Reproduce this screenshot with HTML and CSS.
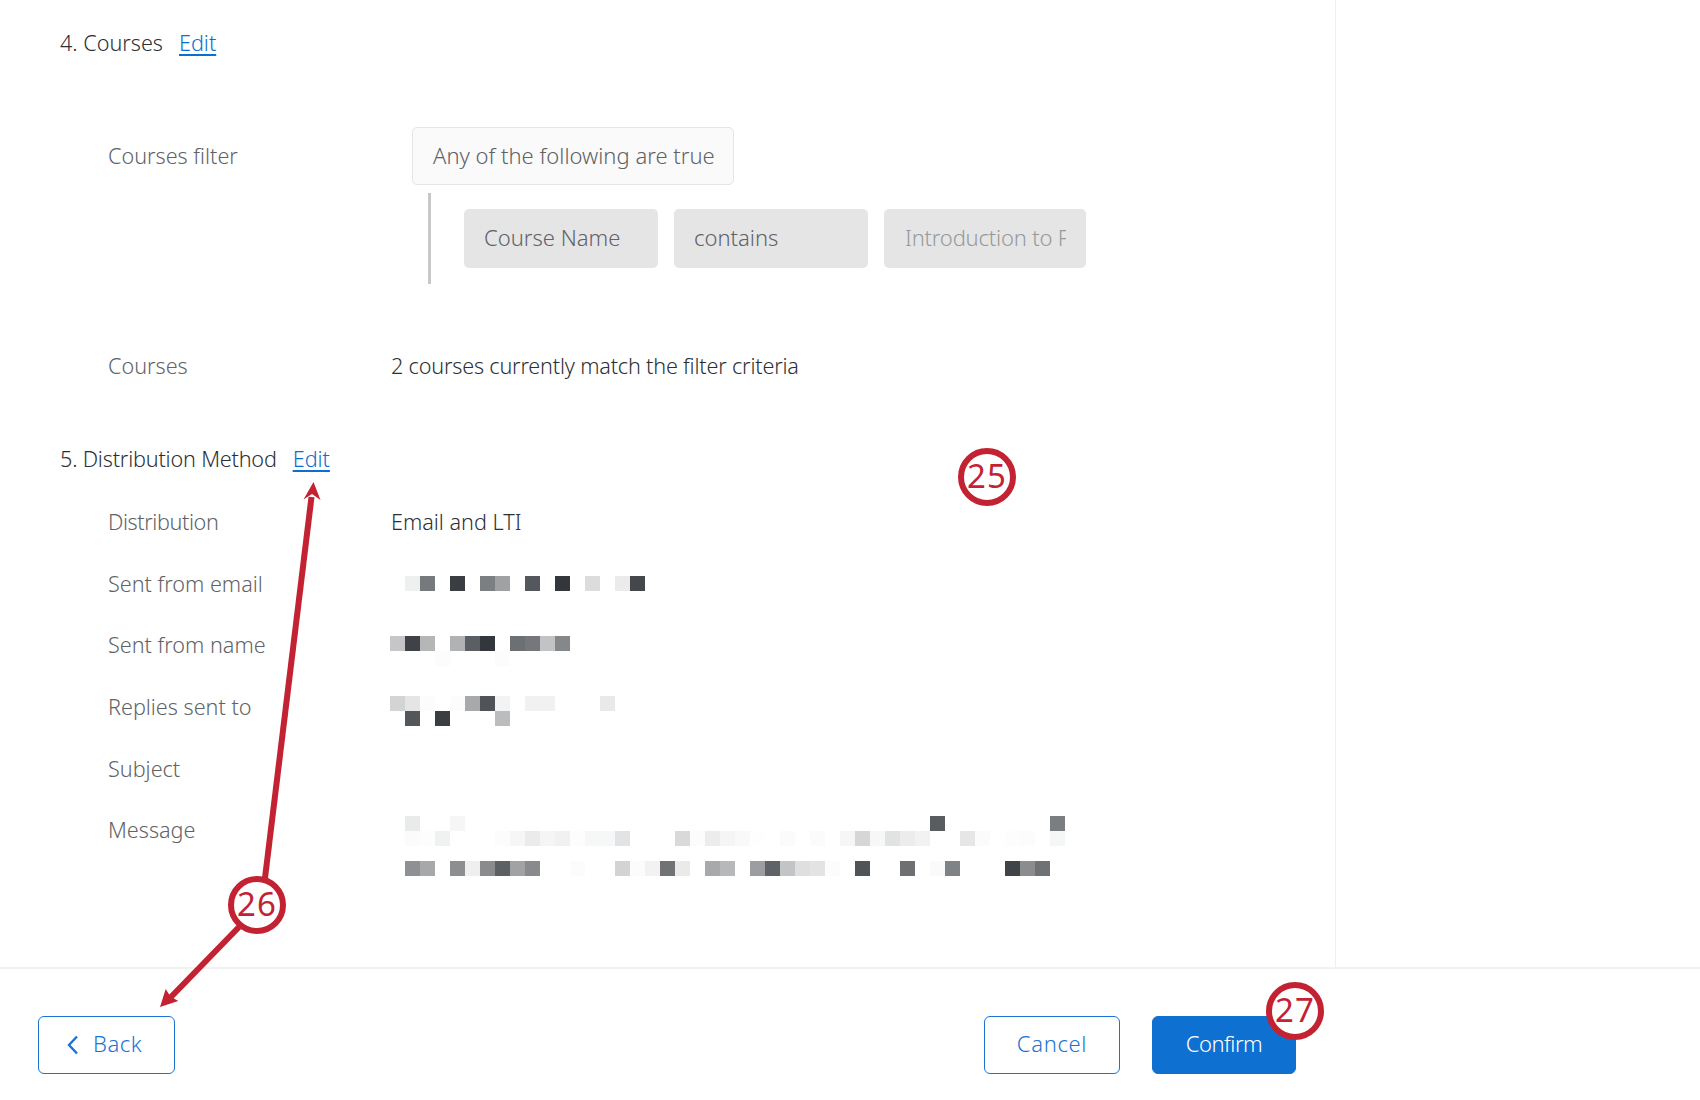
FILE: index.html
```html
<!DOCTYPE html>
<html lang="en">
<head>
<meta charset="utf-8">
<title>Review</title>
<link rel="stylesheet" href="styles.css">
</head>
<body>
<div class="page">
  <div class="main">
    <div class="content">
      <div class="head head-first"><span>4. Courses</span><a class="edit" href="#">Edit</a></div>
      <div class="rows">
        <div class="row row-filter">
          <div class="label label-filter">Courses filter</div>
          <div class="filter">
            <div class="any">Any of the following are true</div>
            <div class="branch">
              <div class="pill pill-name">Course Name</div>
              <div class="pill pill-op">contains</div>
              <div class="pill pill-val"><span class="pill-clip">Introduction to F</span></div>
            </div>
          </div>
        </div>
        <div class="row row-courses">
          <div class="label">Courses</div>
          <div class="value tight">2 courses currently match the filter criteria</div>
        </div>
      </div>
      <div class="head head-second"><span class="tight">5. Distribution Method</span><a class="edit" href="#">Edit</a></div>
      <div class="rows rows-dist">
        <div class="row"><div class="label tighter">Distribution</div><div class="value">Email and LTI</div></div>
        <div class="row"><div class="label">Sent from email</div>
          <svg class="mosaic m-email" width="270" height="15" viewBox="0 0 18 1" shape-rendering="crispEdges">
            <rect x="1" width="1" height="1" fill="#eef0ef"/><rect x="2" width="1" height="1" fill="#777a7c"/><rect x="4" width="1" height="1" fill="#3a3d42"/><rect x="6" width="1" height="1" fill="#7c7f82"/><rect x="7" width="1" height="1" fill="#a0a1a3"/><rect x="9" width="1" height="1" fill="#54575c"/><rect x="11" width="1" height="1" fill="#33363b"/><rect x="13" width="1" height="1" fill="#dcdcdc"/><rect x="15" width="1" height="1" fill="#ebebec"/><rect x="16" width="1" height="1" fill="#44474c"/>
          </svg>
        </div>
        <div class="row"><div class="label">Sent from name</div>
          <svg class="mosaic m-name" width="180" height="30" viewBox="0 0 12 2" shape-rendering="crispEdges">
            <rect x="0" width="1" height="1" fill="#c6c6c8"/><rect x="1" width="1" height="1" fill="#3f4246"/><rect x="2" width="1" height="1" fill="#b5b6b7"/><rect x="4" width="1" height="1" fill="#b1b2b4"/><rect x="5" width="1" height="1" fill="#5b5e62"/><rect x="6" width="1" height="1" fill="#33363a"/><rect x="8" width="1" height="1" fill="#6d7073"/><rect x="9" width="1" height="1" fill="#75777a"/><rect x="10" width="1" height="1" fill="#c2c3c4"/><rect x="11" width="1" height="1" fill="#85888a"/>
            <rect x="3" y="1" width="1" height="1" fill="#fcfcfc"/><rect x="7" y="1" width="1" height="1" fill="#fcfcfc"/>
          </svg>
        </div>
        <div class="row"><div class="label">Replies sent to</div>
          <svg class="mosaic m-reply" width="225" height="30" viewBox="0 0 15 2" shape-rendering="crispEdges">
            <rect x="0" width="1" height="1" fill="#d3d5d4"/><rect x="1" width="1" height="1" fill="#e5e5e5"/><rect x="2" width="1" height="1" fill="#fcfcfc"/><rect x="4" width="1" height="1" fill="#fcfcfc"/><rect x="5" width="1" height="1" fill="#a8a9aa"/><rect x="6" width="1" height="1" fill="#505358"/><rect x="7" width="1" height="1" fill="#f3f3f3"/><rect x="9" width="1" height="1" fill="#f1f1f1"/><rect x="10" width="1" height="1" fill="#f1f1f1"/><rect x="14" width="1" height="1" fill="#e9e9e9"/>
            <rect x="1" y="1" width="1" height="1" fill="#54575a"/><rect x="3" y="1" width="1" height="1" fill="#3a3d42"/><rect x="7" y="1" width="1" height="1" fill="#bbbcbd"/>
          </svg>
        </div>
        <div class="row"><div class="label">Subject</div><div class="value"></div></div>
        <div class="row"><div class="label">Message</div>
          <svg class="mosaic m-msg" width="675" height="60" viewBox="0 0 45 4" shape-rendering="crispEdges">
            <rect x="1" y="0" width="1" height="1" fill="#e9ebea"/><rect x="4" y="0" width="1" height="1" fill="#f6f6f6"/><rect x="36" y="0" width="1" height="1" fill="#5a5d60"/><rect x="44" y="0" width="1" height="1" fill="#7b7e81"/>
            <rect x="1" y="1" width="1" height="1" fill="#fbfbfb"/><rect x="2" y="1" width="1" height="1" fill="#fdfdfd"/><rect x="3" y="1" width="1" height="1" fill="#f0f2f1"/><rect x="7" y="1" width="1" height="1" fill="#fcfcfc"/><rect x="8" y="1" width="1" height="1" fill="#f6f6f6"/><rect x="9" y="1" width="1" height="1" fill="#ebebec"/><rect x="10" y="1" width="1" height="1" fill="#f5f5f5"/><rect x="11" y="1" width="1" height="1" fill="#f1f1f1"/><rect x="12" y="1" width="1" height="1" fill="#fdfdfd"/><rect x="13" y="1" width="1" height="1" fill="#f6f7f7"/><rect x="14" y="1" width="1" height="1" fill="#f6f7f7"/><rect x="15" y="1" width="1" height="1" fill="#e2e3e5"/><rect x="19" y="1" width="1" height="1" fill="#d9d9d9"/><rect x="20" y="1" width="1" height="1" fill="#fcfcfc"/><rect x="21" y="1" width="1" height="1" fill="#ececec"/><rect x="22" y="1" width="1" height="1" fill="#f5f5f5"/><rect x="23" y="1" width="1" height="1" fill="#f9f9f9"/><rect x="24" y="1" width="1" height="1" fill="#fefefe"/><rect x="26" y="1" width="1" height="1" fill="#fbfbfb"/><rect x="28" y="1" width="1" height="1" fill="#fbfbfb"/><rect x="30" y="1" width="1" height="1" fill="#f6f6f6"/><rect x="31" y="1" width="1" height="1" fill="#d6d6d6"/><rect x="32" y="1" width="1" height="1" fill="#f7f7f7"/><rect x="33" y="1" width="1" height="1" fill="#e1e3e2"/><rect x="34" y="1" width="1" height="1" fill="#ececec"/><rect x="35" y="1" width="1" height="1" fill="#f2f2f2"/><rect x="38" y="1" width="1" height="1" fill="#e6e6e6"/><rect x="39" y="1" width="1" height="1" fill="#fbfbfb"/><rect x="41" y="1" width="1" height="1" fill="#fdfdfd"/><rect x="42" y="1" width="1" height="1" fill="#fcfcfc"/><rect x="44" y="1" width="1" height="1" fill="#f5f7f6"/>
            <rect x="1" y="3" width="1" height="1" fill="#8f9093"/><rect x="2" y="3" width="1" height="1" fill="#a7a8aa"/><rect x="4" y="3" width="1" height="1" fill="#8d8e90"/><rect x="5" y="3" width="1" height="1" fill="#efefef"/><rect x="6" y="3" width="1" height="1" fill="#8a8b8d"/><rect x="7" y="3" width="1" height="1" fill="#5d6063"/><rect x="8" y="3" width="1" height="1" fill="#a1a2a4"/><rect x="9" y="3" width="1" height="1" fill="#888b8e"/><rect x="12" y="3" width="1" height="1" fill="#fcfcfc"/><rect x="15" y="3" width="1" height="1" fill="#d2d4d3"/><rect x="16" y="3" width="1" height="1" fill="#fcfcfc"/><rect x="17" y="3" width="1" height="1" fill="#f2f2f2"/><rect x="18" y="3" width="1" height="1" fill="#707376"/><rect x="19" y="3" width="1" height="1" fill="#eaeaea"/><rect x="21" y="3" width="1" height="1" fill="#a8a9ab"/><rect x="22" y="3" width="1" height="1" fill="#b7b8ba"/><rect x="24" y="3" width="1" height="1" fill="#9c9da1"/><rect x="25" y="3" width="1" height="1" fill="#5f6266"/><rect x="26" y="3" width="1" height="1" fill="#c3c4c6"/><rect x="27" y="3" width="1" height="1" fill="#dfdfdf"/><rect x="28" y="3" width="1" height="1" fill="#e3e3e3"/><rect x="29" y="3" width="1" height="1" fill="#fcfcfc"/><rect x="31" y="3" width="1" height="1" fill="#505358"/><rect x="34" y="3" width="1" height="1" fill="#6e6f73"/><rect x="36" y="3" width="1" height="1" fill="#fafafa"/><rect x="37" y="3" width="1" height="1" fill="#808386"/><rect x="41" y="3" width="1" height="1" fill="#404348"/><rect x="42" y="3" width="1" height="1" fill="#8b8c8e"/><rect x="43" y="3" width="1" height="1" fill="#6f7275"/>
          </svg>
        </div>
      </div>
    </div>
    <div class="aside"></div>
  </div>
  <div class="footer">
    <button class="btn btn-back" type="button">
      <svg class="chev" width="12" height="20" viewBox="0 0 12 20"><path d="M10 1.5 L2 10 L10 18.5" fill="none" stroke="#1b73d3" stroke-width="2.4"/></svg>
      <span>Back</span>
    </button>
    <div class="actions">
      <button class="btn btn-cancel" type="button">Cancel</button>
      <button class="btn btn-confirm" type="button">Confirm</button>
    </div>
  </div>

  <svg class="arrows" width="1700" height="1100" viewBox="0 0 1700 1100">
    <path d="M265 878 L311.5 497" stroke="#c32232" stroke-width="6" fill="none"/>
    <path d="M313.5 482 L320.5 500 L312 494 L303.5 499.5 Z" fill="#c32232"/>
    <path d="M239 927 L170 998" stroke="#c32232" stroke-width="6" fill="none"/>
    <path d="M160 1007 L165.7 989 L170.5 996.5 L178.3 1001 Z" fill="#c32232"/>
  </svg>
  <div class="badge badge-25">25</div>
  <div class="badge badge-26">26</div>
  <div class="badge badge-27">27</div>
</div>
</body>
</html>
```

FILE: styles.css
```css
* { box-sizing: border-box; }
html, body { margin: 0; padding: 0; background: #fff; }
body {
  font-family: "Noto Sans", "Open Sans", sans-serif;
  font-size: 21.6px;
  font-weight: 300;
  color: #2c3034;
  overflow: hidden;
}
.page { position: relative; width: 1700px; height: 1100px; display: flex; flex-direction: column; }
.main { display: flex; height: 967px; flex: none; }
.content { width: 1336px; border-right: 1px solid #efefef; padding-left: 60px; }
.aside { flex: 1; }

.head { display: flex; gap: 16px; height: 24px; line-height: 24px; color: #2c3034; }
.head-first { margin-top: 31px; }
.head-second { margin-top: 69px; }
.edit { color: #0b6ed0; text-decoration: underline; text-underline-offset: 3px; }

.tight { letter-spacing: -0.18px; }
.tighter { letter-spacing: -0.4px; }

.rows { padding-left: 48px; }
.rows-dist { margin-top: 39px; }
.row { display: grid; grid-template-columns: 282px 1fr; height: 24px; line-height: 24px; margin-bottom: 37.7px; }
.label { color: #5f6367; }
.value { padding-left: 1px; color: #2c3034; }

.row-filter { height: auto; margin: 72px 0 70px; }
.label-filter { line-height: 58px; }
.filter { padding-left: 22px; font-size: 22px; }
.any {
  width: 322px; height: 58px; line-height: 54px; padding-left: 20px;
  background: #fafafa; border: 1px solid #e5e5e5; border-radius: 5px; color: #5f6367;
}
.branch {
  display: flex; gap: 16px; height: 91px; margin: 8px 0 0 16px; padding: 16px 0 0 33px;
  border-left: 3px solid #c8c8c8;
}
.pill {
  height: 59px; line-height: 56px; padding-left: 20px; background: #e5e5e5; border-radius: 5px; color: #5f6367;
}
.pill-name { width: 194px; }
.pill-op { width: 194px; }
.pill-val { width: 202px; padding-left: 21px; color: #979a9c; }
.pill-clip { display: block; width: 161px; overflow: hidden; white-space: nowrap; letter-spacing: -0.2px; }
.row-courses { margin-bottom: 0; }

.mosaic { display: block; }
.m-email { margin-top: 4px; }
.m-name { margin-top: 3px; }
.m-reply { margin-top: 1px; }
.m-msg { margin-top: -2px; }

.footer {
  flex: 1; display: flex; justify-content: space-between; align-items: flex-start;
  border-top: 2px solid #f2f2f2; padding: 47px 404px 0 38px;
}
.actions { display: flex; gap: 32px; }
.btn {
  height: 58px; border-radius: 6px; font: inherit; font-size: 22px; background: #fff; color: #1b73d3; border: 1px solid #1b73d3; padding: 0 0 4px;
  display: flex; align-items: center; justify-content: center;
}
.chev { margin-top: 3px; }
.btn-back { width: 137px; justify-content: flex-start; gap: 14px; padding-left: 28px; letter-spacing: 0.5px; }
.btn-cancel { width: 136px; letter-spacing: 0.65px; }
.btn-confirm { width: 144px; background: #0e70d1; border-color: #0e70d1; color: #fff; letter-spacing: -0.5px; }

.arrows { position: absolute; left: 0; top: 0; pointer-events: none; }
.badge {
  position: absolute; width: 58px; height: 58px; border-radius: 50%;
  border: 6px solid #c32232; background: #fff; color: #c32232;
  font-size: 33px; font-weight: 400; line-height: 43px; text-align: center; letter-spacing: 1px;
}
.badge-25 { left: 958px; top: 448px; }
.badge-26 { left: 228px; top: 876px; }
.badge-27 { left: 1266px; top: 982px; }
```
